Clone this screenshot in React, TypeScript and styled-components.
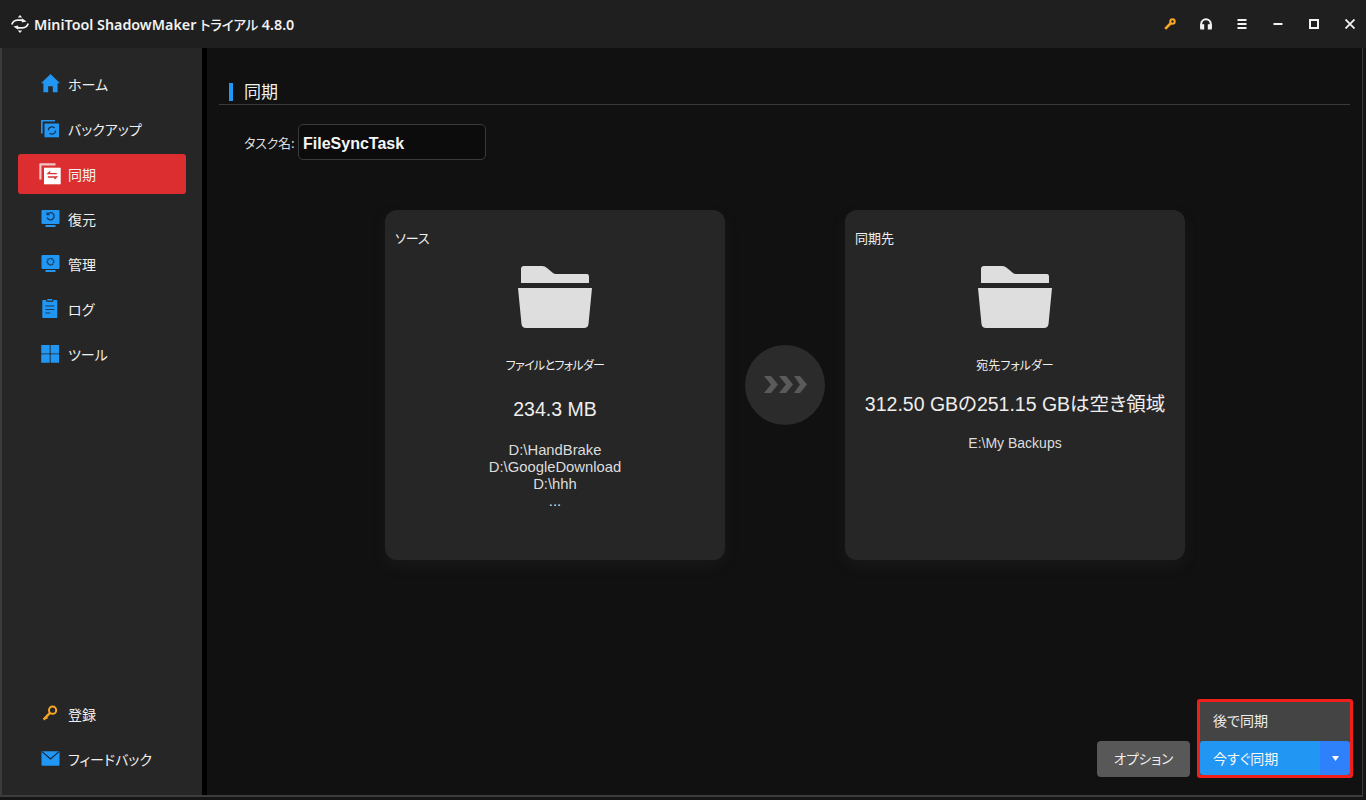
import { ReactElement, ReactNode } from 'react';
import styled, { createGlobalStyle } from 'styled-components';

const JP = `"Noto Sans CJK JP", "Noto Sans", sans-serif`;
const BLUE = '#2196f3';
const AMBER = '#f9a825';

const GlobalStyle = createGlobalStyle`
    html, body {
        margin: 0;
        padding: 0;
        background-color: #161616;
    }
    * {
        box-sizing: border-box;
    }
`;

const Window = styled.div`
    width: 1366px;
    height: 800px;
    display: flex;
    flex-direction: column;
    overflow: hidden;
    background-color: #161616;
    font-family: ${JP};
    font-feature-settings: "palt";
    color: #eeeeee;
`;

const TitleBar = styled.header`
    height: 48px;
    flex-shrink: 0;
    display: flex;
    align-items: center;
    padding-left: 11px;
    background-color: #1f1f1f;
`;

const AppName = styled.h1`
    margin: 0 0 0 5px;
    font-family: "Noto Sans", ${JP};
    font-size: 14.3px;
    font-weight: 600;
    color: #f2f2f2;
    white-space: nowrap;
    flex: 1;
`;

const AppEdition = styled.span`
    font-size: 13.5px;
    font-weight: 500;
    letter-spacing: -0.2px;
`;

const WindowControls = styled.div`
    display: flex;
    align-items: center;
    gap: 12px;
    padding-right: 4px;
`;

const ControlButton = styled.span`
    width: 24px;
    height: 24px;
    display: flex;
    align-items: center;
    justify-content: center;
`;

const Body = styled.div`
    flex: 1;
    min-height: 0;
    margin: 0 3px 3px 0;
    display: flex;
    border-left: 2px solid #3c3c3c;
    border-right: 1px solid #3c3c3c;
    border-bottom: 2px solid #3c3c3c;
`;

const Sidebar = styled.nav`
    width: 200px;
    flex-shrink: 0;
    display: flex;
    flex-direction: column;
    justify-content: space-between;
    padding: 16px 16px 16px;
    background-color: #262626;
`;

const NavGroup = styled.div`
    display: flex;
    flex-direction: column;
    gap: 5px;
`;

const NavItem = styled.a<{ $active?: boolean }>`
    height: 40px;
    display: flex;
    align-items: center;
    gap: 7px;
    padding-left: 23px;
    border-radius: 3px;
    font-size: 14px;
    color: #f0f0f0;
    background-color: ${({ $active }) => ($active ? '#dc2e30' : 'transparent')};
`;

const NavIcon = styled.svg`
    width: 20px;
    height: 20px;
    flex-shrink: 0;
    overflow: visible;
`;

const NavLabel = styled.span`
    padding-bottom: 1px;
`;

const Divider = styled.div`
    width: 5px;
    flex-shrink: 0;
    background-color: #000000;
`;

const Main = styled.main`
    flex: 1;
    min-width: 0;
    display: flex;
    flex-direction: column;
    padding: 27px 12px 17px 12px;
    background-color: #111111;
`;

const SectionHeading = styled.div`
    height: 30px;
    flex-shrink: 0;
    display: flex;
    align-items: flex-start;
    padding: 8px 0 0 10px;
    border-bottom: 1px solid #3a3a3a;
`;

const HeadingBar = styled.span`
    width: 4px;
    height: 18px;
    background-color: ${BLUE};
    margin-right: 11px;
`;

const HeadingText = styled.h2`
    margin: 0;
    font-size: 17px;
    font-weight: 400;
    line-height: 16px;
    color: #f0f0f0;
`;

const TaskRow = styled.div`
    display: flex;
    align-items: center;
    margin-top: 19px;
    padding-left: 25px;
`;

const TaskLabel = styled.label`
    width: 54px;
    font-size: 13px;
    letter-spacing: -0.2px;
    color: #dddddd;
`;

const TaskInput = styled.div`
    width: 188px;
    height: 36px;
    display: flex;
    align-items: center;
    padding: 3px 0 0 4px;
    border: 1px solid #3a3a3a;
    border-radius: 5px;
    background-color: #0c0c0c;
    font-family: "Liberation Sans", sans-serif;
    font-size: 16px;
    font-weight: 700;
    color: #f5f5f5;
`;

const CardRow = styled.div`
    display: flex;
    justify-content: center;
    align-items: center;
    gap: 20px;
    margin-top: 50px;
    padding-left: 1px;
`;

const Card = styled.section`
    width: 340px;
    height: 350px;
    display: flex;
    flex-direction: column;
    align-items: center;
    padding: 19px 10px;
    border-radius: 12px;
    background-color: #262626;
    box-shadow: 0 6px 14px rgba(60, 60, 60, 0.18);
`;

const CardLabel = styled.div`
    align-self: flex-start;
    font-size: 13px;
    line-height: 18px;
    color: #f0f0f0;
`;

const FolderIcon = styled.svg`
    width: 74px;
    height: 62px;
    margin-top: 19px;
    flex-shrink: 0;
`;

const CardName = styled.div<{ $tracking?: number }>`
    margin-top: 28px;
    font-size: 12px;
    line-height: 18px;
    letter-spacing: ${({ $tracking }) => $tracking ?? 0}px;
    color: #f0f0f0;
`;

const CardSize = styled.div<{ $gap: number }>`
    margin-top: ${({ $gap }) => $gap}px;
    font-family: "Liberation Sans", ${JP};
    font-size: 19.5px;
    line-height: 24px;
    color: #eeeeee;
`;

const PathList = styled.div<{ $gap: number; $size: number }>`
    margin-top: ${({ $gap }) => $gap}px;
    font-family: "Liberation Sans", sans-serif;
    font-size: ${({ $size }) => $size}px;
    line-height: 17px;
    text-align: center;
    color: #dddddd;
`;

const ArrowCircle = styled.div`
    width: 80px;
    height: 80px;
    flex-shrink: 0;
    display: flex;
    align-items: center;
    justify-content: center;
    border-radius: 50%;
    background-color: #2b2b2b;
`;

const Footer = styled.footer`
    margin-top: auto;
    display: flex;
    justify-content: flex-end;
    align-items: flex-end;
`;

const OptionButton = styled.button`
    width: 93px;
    height: 36px;
    margin: 0 7px 1px 0;
    padding: 0 0 2px;
    border: 0;
    border-radius: 4px;
    background-color: #585858;
    color: #f0f0f0;
    font-family: ${JP};
    font-feature-settings: "palt";
    font-size: 13.5px;
`;

const SyncGroup = styled.div`
    width: 156px;
    margin-right: -3px;
    display: flex;
    flex-direction: column;
    border: 3px solid #f01f1a;
    border-radius: 3px;
    background-color: #444444;
`;

const SyncLater = styled.div`
    height: 39px;
    display: flex;
    align-items: center;
    padding: 0 0 4px 13px;
    font-size: 14px;
    color: #eeeeee;
`;

const SyncNow = styled.div`
    height: 34px;
    display: flex;
    border-radius: 3px;
    overflow: hidden;
`;

const SyncNowLabel = styled.div`
    flex: 1;
    display: flex;
    align-items: center;
    padding-left: 13px;
    background-color: ${BLUE};
    font-size: 14px;
    color: #f5f5f5;
`;

const SyncCaret = styled.div`
    width: 30px;
    display: flex;
    align-items: center;
    justify-content: center;
    background-color: #2f80fb;
`;

const HomeIcon = (
    <path fill={BLUE} d="M9.5 0 L19 9.3 L16.6 9.3 L16.6 18.3 L11.8 18.3 L11.8 12.3 L7.2 12.3 L7.2 18.3 L2.4 18.3 L2.4 9.3 L0 9.3 Z" />
);

const BackupIcon = (
    <g>
        <path fill="none" stroke={BLUE} strokeWidth="1.6" d="M0.8 14.5 V1.8 H14" />
        <rect x="3.5" y="4.5" width="14.5" height="13.8" fill={BLUE} />
        <circle cx="11" cy="11.5" r="3.6" fill="none" stroke="#173350" strokeWidth="1.4" strokeDasharray="8 3.3" />
    </g>
);

const SyncIcon = (
    <g>
        <path fill="#f0c4c4" d="M-1.7 0.2 Q-1.7 -0.7 -0.7 -0.7 H14.5 V1.6 H0.5 V15.5 H-1.7 Z" />
        <rect x="3" y="3.7" width="16.7" height="16.6" fill="#ffffff" />
        <path fill="none" stroke="#dc2e30" strokeWidth="1.3" d="M15.8 9.6 H7 L9.2 7.6 M6.8 13 H15.6 L13.4 15" />
    </g>
);

const RestoreIcon = (
    <g>
        <rect x="0.5" y="1" width="18" height="14" rx="1" fill={BLUE} />
        <rect x="4.5" y="16" width="10" height="2" fill={BLUE} />
        <path fill="none" stroke="#143a5c" strokeWidth="1.3" d="M6.7 5 A3.6 3.6 0 1 1 6.1 8.5 M6.1 3.5 V5.7 H8.5" />
    </g>
);

const ManageIcon = (
    <g>
        <rect x="0.5" y="1" width="18" height="14" rx="1" fill={BLUE} />
        <rect x="4.5" y="16" width="10" height="2" fill={BLUE} />
        <circle cx="9.5" cy="7.7" r="3.2" fill="none" stroke="#143a5c" strokeWidth="1.5" strokeDasharray="1.6 0.6" />
    </g>
);

const LogIcon = (
    <g transform="translate(-0.7 0)">
        <path fill={BLUE} d="M3 1 H6 V2.8 H13 V1 H16 Q17 1 17 2 V18 Q17 19 16 19 H3 Q2 19 2 18 V2 Q2 1 3 1 Z" />
        <path fill={BLUE} d="M7 0 H12 V1.6 H7 Z" />
        <path stroke="#143a5c" strokeWidth="1.2" d="M5 7 H14 M5 10.5 H14 M5 14 H10" />
    </g>
);

const ToolIcon = (
    <g fill={BLUE}>
        <rect x="0.2" y="1" width="8.5" height="8.5" rx="0.6" />
        <rect x="9.6" y="1" width="8.5" height="8.5" rx="0.6" />
        <rect x="0.2" y="10.3" width="8.5" height="8.5" rx="0.6" />
        <rect x="9.6" y="10.3" width="8.5" height="8.5" rx="0.6" />
    </g>
);

const RegisterIcon = (
    <g fill="none" stroke={AMBER}>
        <circle cx="11.6" cy="6.2" r="3.6" strokeWidth="2" />
        <path strokeWidth="2.4" d="M8.8 9 L2.6 15.6" />
        <path strokeWidth="1.5" d="M5 13.2 L6.4 14.6" />
    </g>
);

const MailIcon = (
    <g>
        <path fill={BLUE} d="M0.5 2.2 H18.5 V15.7 Q18.5 16.7 17.5 16.7 H1.5 Q0.5 16.7 0.5 15.7 Z" />
        <path fill="none" stroke="#123" strokeWidth="1.1" d="M1 2.7 L9.5 10 L18 2.7" />
    </g>
);

const navItems: { label: string; icon: ReactNode; active?: boolean }[] = [
    { label: 'ホーム', icon: HomeIcon },
    { label: 'バックアップ', icon: BackupIcon },
    { label: '同期', icon: SyncIcon, active: true },
    { label: '復元', icon: RestoreIcon },
    { label: '管理', icon: ManageIcon },
    { label: 'ログ', icon: LogIcon },
    { label: 'ツール', icon: ToolIcon },
];

const Folder = (): ReactElement => (
    <FolderIcon viewBox="0 0 74 62">
        <path fill="#dedede" d="M3 3 Q3 0 6 0 H24 Q27 0 29 2 L35 7 Q36 8 38 8 H69 Q71 8 71 11 V17 H3 Z" />
        <path fill="#dedede" d="M0 22 H74 L70.5 58 Q70 62 66 62 H8 Q4 62 3.5 58 Z" />
    </FolderIcon>
);

const Logo = (): ReactElement => (
    <svg width="18" height="18" viewBox="0 0 18 18">
        <path fill="#f4f4f4" d="M9 0 L11.2 2.4 H6.8 Z M9 18 L6.8 15.6 H11.2 Z" />
        <g fill="none" stroke="#f4f4f4" strokeWidth="1.7">
            <path d="M0.8 9.6 Q2 5.5 6.5 5.2 H11" />
            <path d="M17.2 8.4 Q16 12.5 11.5 12.8 H7" />
        </g>
        <path fill="#f4f4f4" d="M10.8 3.2 L15.6 6.4 L10.8 7.6 Z M7.2 14.8 L2.4 11.6 L7.2 10.4 Z" />
    </svg>
);

const App = (): ReactElement => (
    <Window>
        <GlobalStyle />
        <TitleBar>
            <Logo />
            <AppName>MiniTool ShadowMaker <AppEdition>トライアル</AppEdition> 4.8.0</AppName>
            <WindowControls>
                <ControlButton>
                    <svg width="12" height="12" viewBox="0 0 12 12">
                        <circle cx="8.5" cy="3.5" r="2.2" fill="none" stroke={AMBER} strokeWidth="2" />
                        <path stroke={AMBER} strokeWidth="2.6" d="M7 5 L1.2 10.8" />
                    </svg>
                </ControlButton>
                <ControlButton>
                    <svg width="12" height="12" viewBox="0 0 12 12">
                        <path fill="none" stroke="#f2f2f2" strokeWidth="2" d="M1.2 10 V6 A4.8 4.8 0 0 1 10.8 6 V10" />
                        <rect x="0.2" y="6.2" width="4" height="5.3" fill="#f2f2f2" />
                        <rect x="7.8" y="6.2" width="4" height="5.3" fill="#f2f2f2" />
                    </svg>
                </ControlButton>
                <ControlButton>
                    <svg width="10" height="10" viewBox="0 0 10 10">
                        <path stroke="#f2f2f2" strokeWidth="2" d="M0.5 1 H9.5 M0.5 5 H9.5 M0.5 9 H9.5" />
                    </svg>
                </ControlButton>
                <ControlButton>
                    <svg width="10" height="10" viewBox="0 0 10 10">
                        <path stroke="#f2f2f2" strokeWidth="2" d="M0.5 5 H9.5" />
                    </svg>
                </ControlButton>
                <ControlButton>
                    <svg width="10" height="10" viewBox="0 0 10 10">
                        <rect x="1" y="1" width="8" height="8" fill="none" stroke="#f2f2f2" strokeWidth="2" />
                    </svg>
                </ControlButton>
                <ControlButton>
                    <svg width="10" height="10" viewBox="0 0 10 10">
                        <path stroke="#f2f2f2" strokeWidth="1.8" d="M0.5 0.5 L9.5 9.5 M9.5 0.5 L0.5 9.5" />
                    </svg>
                </ControlButton>
            </WindowControls>
        </TitleBar>
        <Body>
            <Sidebar>
                <NavGroup>
                    {navItems.map(({ label, icon, active }) => (
                        <NavItem key={label} $active={active}>
                            <NavIcon viewBox="0 0 20 20">{icon}</NavIcon>
                            <NavLabel>{label}</NavLabel>
                        </NavItem>
                    ))}
                </NavGroup>
                <NavGroup>
                    <NavItem>
                        <NavIcon viewBox="0 0 20 20">{RegisterIcon}</NavIcon>
                        <NavLabel>登録</NavLabel>
                    </NavItem>
                    <NavItem>
                        <NavIcon viewBox="0 0 20 20">{MailIcon}</NavIcon>
                        <NavLabel>フィードバック</NavLabel>
                    </NavItem>
                </NavGroup>
            </Sidebar>
            <Divider />
            <Main>
                <SectionHeading>
                    <HeadingBar />
                    <HeadingText>同期</HeadingText>
                </SectionHeading>
                <TaskRow>
                    <TaskLabel>タスク名:</TaskLabel>
                    <TaskInput>FileSyncTask</TaskInput>
                </TaskRow>
                <CardRow>
                    <Card>
                        <CardLabel>ソース</CardLabel>
                        <Folder />
                        <CardName $tracking={-0.7}>ファイルとフォルダー</CardName>
                        <CardSize $gap={23}>234.3 MB</CardSize>
                        <PathList $gap={21} $size={14.8}>
                            <div>D:\HandBrake</div>
                            <div>D:\GoogleDownload</div>
                            <div>D:\hhh</div>
                            <div>...</div>
                        </PathList>
                    </Card>
                    <ArrowCircle>
                        <svg width="44" height="20" viewBox="0 0 44 20">
                            <path fill="#5a5a5a" d="M1 1 H8 L15 9.5 L8 18 H1 L8 9.5 Z M16 1 H23 L30 9.5 L23 18 H16 L23 9.5 Z M31 1 H37 L44 9.5 L37 18 H31 L37 9.5 Z" />
                        </svg>
                    </ArrowCircle>
                    <Card>
                        <CardLabel>同期先</CardLabel>
                        <Folder />
                        <CardName>宛先フォルダー</CardName>
                        <CardSize $gap={18}>312.50 GBの251.15 GBは空き領域</CardSize>
                        <PathList $gap={19} $size={14}>
                            <div>E:\My Backups</div>
                        </PathList>
                    </Card>
                </CardRow>
                <Footer>
                    <OptionButton>オプション</OptionButton>
                    <SyncGroup>
                        <SyncLater>後で同期</SyncLater>
                        <SyncNow>
                            <SyncNowLabel>今すぐ同期</SyncNowLabel>
                            <SyncCaret>
                                <svg width="7" height="5" viewBox="0 0 7 5">
                                    <path fill="#ffffff" d="M0 0 H7 L3.5 5 Z" />
                                </svg>
                            </SyncCaret>
                        </SyncNow>
                    </SyncGroup>
                </Footer>
            </Main>
        </Body>
    </Window>
);

export default App;
